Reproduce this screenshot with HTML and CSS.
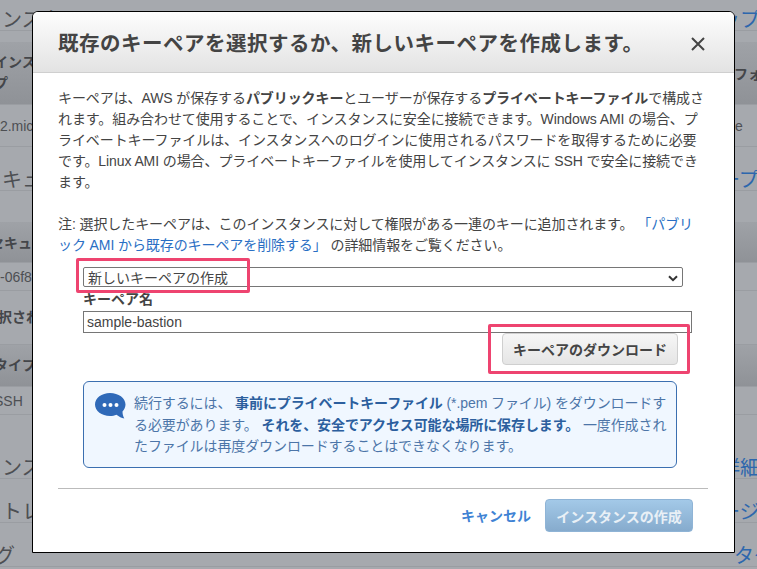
FILE: index.html
```html
<!DOCTYPE html>
<html lang="ja">
<head>
<meta charset="utf-8">
<title>キーペア</title>
<link rel="stylesheet" href="styles.css">
</head>
<body>
<div class="page">
  <div class="row big h31"><span>ンスタンス</span><a class="link">ップロ</a></div>
  <div class="row h11 plain"></div>
  <div class="row head h63"><span class="label shift-6">インスタンス<br>プ</span><span class="label-r">フォ</span></div>
  <div class="row mid h42"><span class="shift-5">t2.micro</span><span class="indent-6">ze</span></div>
  <div class="row big h44"><span>キュリティ</span><a class="link">ープロ</a></div>
  <div class="row h31 plain"></div>
  <div class="row head h41 pad-top"><span class="label shift-12">セキュリティ</span></div>
  <div class="row mid h28"><span class="shift-2">-06f8a</span></div>
  <div class="row h54"><span class="label shift-4">択された</span></div>
  <div class="row head h42"><span class="label shift-6">タイプ</span></div>
  <div class="row mid h28"><span class="shift-6">SSH</span></div>
  <div class="row big h64"><span>ンスタンス</span><a class="link">詳細の</a></div>
  <div class="row big h44"><span>トレージ</span><a class="link">ージの</a></div>
  <div class="row big h44"><span class="shift-27">ング</span><a class="link wide">タグの</a></div>
</div>

<section class="modal">
  <header class="modal-head">
    <h1>既存のキーペアを選択するか、新しいキーペアを作成します。</h1>
    <svg class="close" viewBox="0 0 14 14" width="14" height="14"><path d="M1 1 13 13M13 1 1 13" stroke="#444" stroke-width="2" fill="none"/></svg>
  </header>
  <div class="modal-body">
    <p class="desc">キーペアは、AWS が保存する<b>パブリックキー</b>とユーザーが保存する<b>プライベートキーファイル</b>で構成されます。組み合わせて使用することで、インスタンスに安全に接続できます。Windows AMI の場合、プライベートキーファイルは、インスタンスへのログインに使用されるパスワードを取得するために必要です。Linux AMI の場合、プライベートキーファイルを使用してインスタンスに SSH で安全に接続できます。</p>
    <p class="note">注: 選択したキーペアは、このインスタンスに対して権限がある一連のキーに追加されます。 <a>「パブリック AMI から既存のキーペアを削除する」</a> の詳細情報をご覧ください。</p>
    <div class="form">
      <div class="select">
        <span>新しいキーペアの作成</span>
        <svg viewBox="0 0 10 7" width="10" height="7"><path d="M1 1.2 5 5.2 9 1.2" stroke="#333" stroke-width="2" fill="none"/></svg>
        <i class="mark mark-select"></i>
      </div>
      <label class="field-label">キーペア名</label>
      <div class="input">sample-bastion</div>
      <div class="dl-row">
        <button class="btn-dl">キーペアのダウンロード</button>
        <i class="mark mark-dl"></i>
      </div>
      <div class="info">
        <svg class="bubble" viewBox="0 0 31 27" width="31" height="27"><path d="M15 0C6.700 0 0 5 0 11.500S6.700 23 15 23c2.500 0 4.500-.4 6.500-1.200 2.500 2 5 3.200 7.800 3.800-1.300-2.300-1.800-4.500-1.800-7C29.300 16.500 30.500 14 30.500 11.500 30.500 5 23.500 0 15 0Z" fill="#2f69b8"/><circle cx="9.500" cy="12" r="2" fill="#fff"/><circle cx="15.500" cy="12" r="2" fill="#fff"/><circle cx="21.500" cy="12" r="2" fill="#fff"/></svg>
        <p>続行するには、 <b>事前にプライベートキーファイル</b> (*.pem ファイル) をダウンロードする必要があります。 <b>それを、安全でアクセス可能な場所に保存します。</b> 一度作成されたファイルは再度ダウンロードすることはできなくなります。</p>
      </div>
    </div>
    <footer class="modal-foot">
      <a class="cancel">キャンセル</a>
      <button class="btn-primary">インスタンスの作成</button>
    </footer>
  </div>
</section>
</body>
</html>
```
FILE: styles.css
```css
* { box-sizing: border-box; }
html, body { margin: 0; height: 100%; }
body {
  width: 757px;
  height: 569px;
  overflow: hidden;
  position: relative;
  background: #a6a9ae;
  font-family: "Liberation Sans", "Noto Sans CJK JP", sans-serif;
  color: #444;
  font-size: 14px;
}
.page { display: flex; flex-direction: column; }
.row {
  display: flex;
  align-items: center;
  flex: none;
  border-bottom: 1px solid #9a9da2;
  color: #4d4f53;
  overflow: hidden;
  white-space: nowrap;
  padding-left: 2px;
}
.row > :last-child:not(:first-child) {
  position: absolute;
  left: 734px;
  width: 23px;
  overflow: hidden;
}
.big { font-size: 20px; align-items: flex-end; }
.big > span, .big > a { line-height: 20px; }
.big > a { text-indent: -14px; }
.mid { font-size: 14px; }
.plain { border-bottom-color: transparent; }
.head { background: linear-gradient(#9fa2a7, #8f9297); }
.pad-top { padding-top: 3px; }
.label { font-size: 14px; font-weight: 700; line-height: 21px; color: #44464a; }
.label-r { font-size: 14px; font-weight: 700; color: #44464a; }
.link { color: #2d67ad; }
.shift-2 { margin-left: -2px; }
.shift-4 { margin-left: -4px; }
.shift-5 { margin-left: -6px; }
.shift-6 { margin-left: -8px; }
.shift-12 { margin-left: -12px; }
.shift-27 { margin-left: -27px; }
.indent-6 { text-indent: -6px; }
.row > .wide { left: 724px; width: 33px; text-indent: 0; }
.h11 { height: 11px; } .h28 { height: 28px; } .h31 { height: 31px; }
.h41 { height: 41px; } .h42 { height: 42px; } .h44 { height: 44px; } .h54 { height: 54px; }
.h63 { height: 63px; } .h64 { height: 64px; }

.modal {
  position: absolute;
  left: 32px;
  top: 11px;
  width: 703px;
  height: 542px;
  background: #fff;
  border: 1px solid #000;
  border-radius: 6px 6px 0 0;
  display: flex;
  flex-direction: column;
}
.modal-head {
  height: 61px;
  flex: none;
  display: flex;
  align-items: center;
  justify-content: space-between;
  padding: 4px 29px 0 25px;
  background: linear-gradient(#fdfdfd, #e3e3e3);
  border-bottom: 1px solid #cfcfcf;
  border-radius: 5px 5px 0 0;
}
h1 { margin: 0; font-size: 20.500px; letter-spacing: .5px; line-height: 28px; font-weight: 700; color: #444; }
.close { flex: none; }
.modal-body { flex: 1; padding: 15px 26px 0 25px; display: flex; flex-direction: column; }
.desc, .note { margin: 0; line-height: 21px; color: #444; width: 646px; letter-spacing: -.09px; }
.note { margin-top: 21px; }
.note a { color: #2a6fc4; }
.form { padding-left: 25px; width: 634px; }
.select {
  position: relative;
  margin-top: 11px;
  width: 600px;
  height: 20px;
  border: 1px solid #767676;
  border-radius: 2px;
  display: flex;
  justify-content: space-between;
  align-items: center;
  padding: 2px 4px 0;
  color: #444;
}
.select span { line-height: 18px; }
.mark { position: absolute; border: 3px solid #ee4470; border-radius: 2px; pointer-events: none; }
.mark-select { left: -8px; top: -10px; width: 174px; height: 35px; }
.field-label { display: block; font-weight: 700; line-height: 24px; height: 24px; color: #444; }
.input {
  width: 609px;
  height: 22px;
  border: 1px solid #767676;
  line-height: 21px;
  padding-left: 3px;
  color: #444;
}
.dl-row { position: relative; display: flex; justify-content: flex-end; width: 595px; height: 32px; }
.btn-dl, .btn-primary {
  font: inherit;
  font-weight: 700;
  border-radius: 4px;
  padding: 0;
  cursor: pointer;
}
.btn-dl {
  width: 176px;
  height: 32px;
  border: 1px solid #cfcfcf;
  background: linear-gradient(#f6f6f6, #e5e5e5);
  color: #444;
}
.mark-dl { left: 405px; top: -9px; width: 202px; height: 50px; }
.info {
  margin-top: 16px;
  width: 594px;
  height: 87px;
  border: 1px solid #3b6fb0;
  border-radius: 6px;
  background: #f0f7ff;
  display: flex;
  gap: 8px;
  padding: 11px 4px 0 11px;
}
.bubble { flex: none; }
.info p { margin: 0; line-height: 21.500px; color: #4c75a8; letter-spacing: -.1px; }
.info b { color: #2c5f9e; }
.modal-foot {
  margin-top: 20px;
  border-top: 1px solid #bbb;
  width: 650px;
  display: flex;
  justify-content: flex-end;
  align-items: center;
  gap: 14px;
  padding: 10px 15px 0 0;
}
.cancel { color: #3f83d4; font-weight: 700; position: relative; top: -1px; }
.btn-primary {
  width: 148px;
  height: 33px;
  border: 1px solid #8fb4d6;
  background: linear-gradient(#a3c9e8, #86abcd);
  color: #e9f0f6;
}
```
